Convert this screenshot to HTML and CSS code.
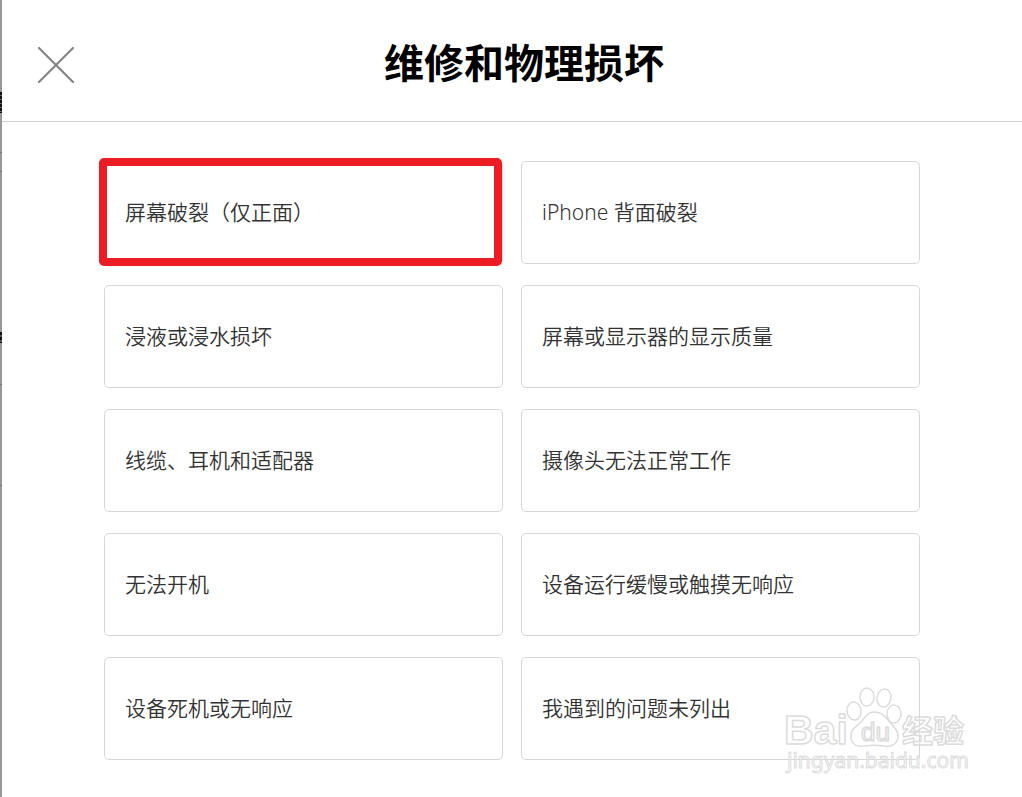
FILE: index.html
```html
<!DOCTYPE html>
<html lang="zh-CN">
<head>
<meta charset="utf-8">
<meta name="viewport" content="width=device-width, initial-scale=1">
<title>维修和物理损坏</title>
<link rel="stylesheet" href="styles.css">
</head>
<body>
<div class="backdrop" aria-hidden="true"></div>
<main class="dialog">
  <header class="dialog-header">
    <button class="close" type="button" aria-label="关闭">
      <svg viewBox="0 0 38 38" width="38" height="38"><path d="M3 2 37 36M37 2 3 36" fill="none" stroke="#858585" stroke-width="2.2" stroke-linecap="round"/></svg>
    </button>
    <h1 class="title">维修和物理损坏</h1>
  </header>
  <div class="options">
    <button class="option option-marked" type="button">屏幕破裂（仅正面）</button>
    <button class="option" type="button">iPhone 背面破裂</button>
    <button class="option" type="button">浸液或浸水损坏</button>
    <button class="option" type="button">屏幕或显示器的显示质量</button>
    <button class="option" type="button">线缆、耳机和适配器</button>
    <button class="option" type="button">摄像头无法正常工作</button>
    <button class="option" type="button">无法开机</button>
    <button class="option" type="button">设备运行缓慢或触摸无响应</button>
    <button class="option" type="button">设备死机或无响应</button>
    <button class="option" type="button">我遇到的问题未列出</button>
  </div>
</main>
<svg class="watermark" viewBox="0 0 200 100" width="200" height="100">
  <ellipse cx="72" cy="31" rx="7" ry="9" transform="rotate(-8 72 31)"/>
  <ellipse cx="85" cy="17" rx="7" ry="9"/>
  <ellipse cx="102" cy="18" rx="7" ry="9" transform="rotate(12 102 18)"/>
  <ellipse cx="112" cy="34" rx="7" ry="9"/>
  <path d="M92 32C85 32 83 38 78 43C72 48 68 51 69 58C70 65 76 67 83 66C89 65 95 65 101 66C110 68 116 63 116 56C116 49 110 45 106 40C102 35 99 32 92 32Z"/>
  <text class="mark-brand" x="2" y="64">Bai</text>
  <text class="mark-du" x="79" y="61">du</text>
  <text class="mark-cjk" x="120" y="62">经验</text>
  <text class="mark-url" x="5" y="88">jingyan.baidu.com</text>
</svg>
</body>
</html>
```
FILE: styles.css
```css
* {
  box-sizing: border-box;
}

body {
  margin: 0;
  min-height: 100vh;
  display: flex;
  position: relative;
  background: #fff;
  font-family: "Noto Sans", "Noto Sans CJK SC", sans-serif;
  color: #333;
}

/* The dimmed page that shows beside the dialog */
.backdrop {
  flex: 0 0 2px;
  background:
    repeating-linear-gradient(#111 0 3px, #666 3px 4px) 0 92px / 2px 21px no-repeat,
    linear-gradient(#777, #777) 0 152px / 2px 1px no-repeat,
    linear-gradient(#777, #777) 0 171px / 2px 1px no-repeat,
    repeating-linear-gradient(#111 0 3px, #555 3px 5px) 0 332px / 2px 11px no-repeat,
    linear-gradient(#777, #777) 0 384px / 2px 1px no-repeat,
    linear-gradient(#777, #777) 0 485px / 2px 1px no-repeat,
    #979797;
}

.dialog {
  flex: 1;
  min-width: 0;
}

.dialog-header {
  display: flex;
  align-items: flex-start;
  height: 122px;
  padding: 33px 48px 0 34px;
  border-bottom: 1px solid #d2d2d2;
}

.close {
  display: flex;
  margin-top: 13px;
  padding: 0;
  border: 0;
  background: none;
  cursor: pointer;
}

.title {
  flex: 1;
  margin: 0;
  font-size: 40px;
  line-height: 56px;
  font-weight: 700;
  font-family: "Noto Sans CJK SC", sans-serif;
  text-align: center;
  color: #000;
}

.options {
  display: grid;
  grid-template-columns: 1fr 1fr;
  gap: 21px 18px;
  width: 80%;
  margin: 39px auto 36px;
}

.option {
  position: relative;
  min-height: 103px;
  padding: 0 20px 2px;
  border: 1px solid #d6d6d6;
  border-radius: 5px;
  background: #fff;
  font: inherit;
  font-size: 21px;
  line-height: 30px;
  font-weight: 350;
  color: #333;
  text-align: left;
  cursor: pointer;
}

/* Hand-drawn highlight frame over the first option */
.option-marked::after {
  content: "";
  position: absolute;
  inset: -4px 0 -3px -6px;
  border: 8px solid #ed1c24;
  border-radius: 5px;
}

.watermark {
  position: absolute;
  right: 40px;
  bottom: 17px;
  pointer-events: none;
  fill: #fff;
  fill-opacity: 0.4;
  stroke: #dcdcdc;
  stroke-width: 1.5px;
  stroke-linejoin: round;
}

.mark-brand {
  font: 700 41px "Liberation Sans", sans-serif;
}

.mark-cjk {
  font: 700 31px "Noto Sans CJK SC", sans-serif;
}

.mark-url {
  font: 400 21px "Noto Sans", sans-serif;
  stroke-width: 1px;
}

.mark-du {
  font: 400 26px "Liberation Sans", sans-serif;
}
```
